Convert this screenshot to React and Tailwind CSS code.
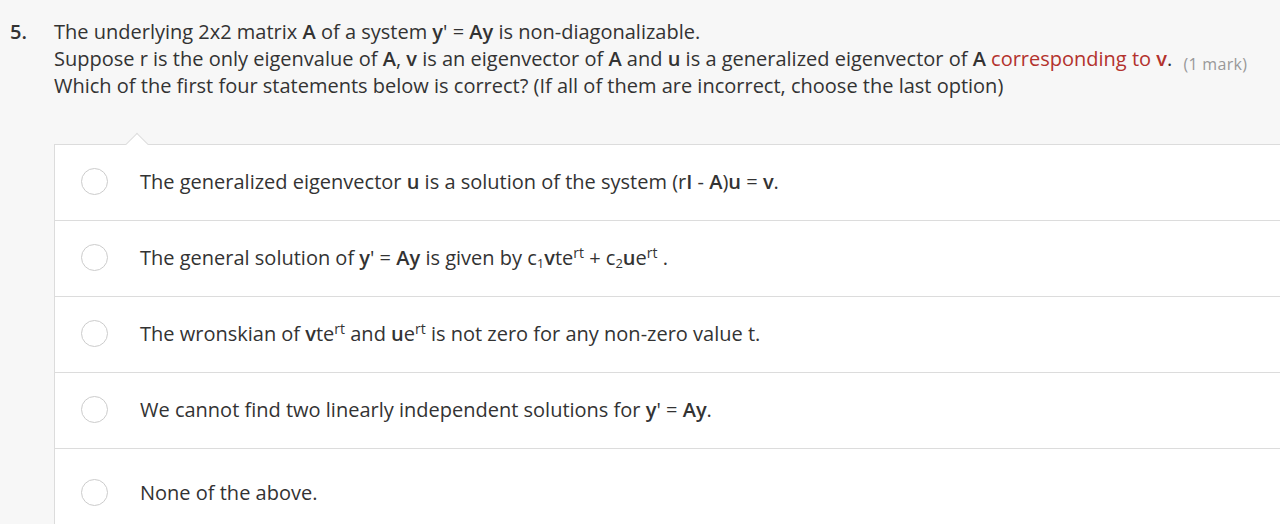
import React from "react";

const options = [
  <>
    The generalized eigenvector <b className="font-semibold">u</b> is a solution of the system (r
    <b className="font-semibold">I</b> - <b className="font-semibold">A</b>)<b className="font-semibold">u</b> ={" "}
    <b className="font-semibold">v</b>.
  </>,
  <>
    The general solution of <b className="font-semibold">y</b>' = <b className="font-semibold">Ay</b> is given by c
    <sub className="text-[13px]">1</sub>
    <b className="font-semibold">v</b>te<sup className="text-[14px]">rt</sup> + c<sub className="text-[13px]">2</sub>
    <b className="font-semibold">u</b>e<sup className="text-[14px]">rt</sup> .
  </>,
  <>
    The wronskian of <b className="font-semibold">v</b>te<sup className="text-[14px]">rt</sup> and{" "}
    <b className="font-semibold">u</b>e<sup className="text-[14px]">rt</sup> is not zero for any non-zero value t.
  </>,
  <>
    We cannot find two linearly independent solutions for <b className="font-semibold">y</b>' ={" "}
    <b className="font-semibold">Ay</b>.
  </>,
  <>None of the above.</>,
];

export default function App() {
  return (
    <div
      className="min-h-[524px] bg-[#f7f7f7] text-[#333] overflow-hidden"
      style={{ fontFamily: '"Open Sans", sans-serif' }}
    >
      {/* Question */}
      <div className="flex pt-[19px] pl-[10px]">
        <div className="w-[44px] text-[20px] leading-[26px] font-semibold">5.</div>
        <div className="text-[20px] leading-[26.5px]">
          <p>
            The underlying 2x2 matrix <b className="font-semibold">A</b> of a system{" "}
            <b className="font-semibold">y</b>' = <b className="font-semibold">Ay</b> is non-diagonalizable.
          </p>
          <p className="whitespace-nowrap">
            Suppose r is the only eigenvalue of <b className="font-semibold">A</b>,{" "}
            <b className="font-semibold">v</b> is an eigenvector of <b className="font-semibold">A</b> and{" "}
            <b className="font-semibold">u</b> is a generalized eigenvector of <b className="font-semibold">A</b>{" "}
            <span className="text-[#b3322d]">
              corresponding to <b className="font-semibold">v</b>
            </span>
            .{" "}
            <span className="text-[16px] text-[#999] relative top-[4px] ml-[6px] tracking-[0.3px]">(1 mark)</span>
          </p>
          <p>
            Which of the first four statements below is correct? (If all of them are incorrect, choose the last option)
          </p>
        </div>
      </div>

      {/* Answers */}
      <div className="relative ml-[54px] mt-[44px] bg-white border-t border-l border-[#dcdcdc]">
        <div className="absolute -top-[9px] left-[74px] w-[16px] h-[16px] bg-white border-t border-l border-[#dcdcdc] rotate-45" />
        {options.map((opt, i) => {
          const last = i === options.length - 1;
          return (
            <div
              key={i}
              className={`flex ${last ? "h-[90px] pt-[30px]" : "h-[76px] pb-[2px] items-center border-b border-[#dcdcdc]"}`}
            >
              <div className="ml-[26px] w-[27px] h-[27px] rounded-full border border-[#cccccc] bg-white shrink-0" />
              <div className="ml-[32px] text-[20px] leading-[27px] whitespace-nowrap">{opt}</div>
            </div>
          );
        })}
      </div>
    </div>
  );
}
